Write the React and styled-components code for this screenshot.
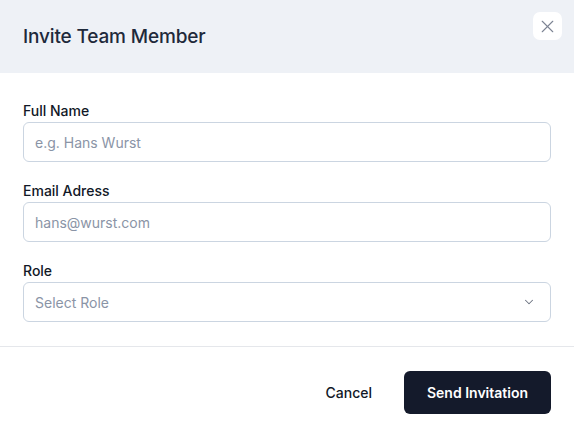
import styled, { createGlobalStyle } from 'styled-components';
import { X, ChevronDown } from 'lucide-react';

const GlobalStyle = createGlobalStyle`
  html, body {
    margin: 0;
    padding: 0;
    background: #ffffff;
  }
  body {
    font-family: Inter, "Liberation Sans", sans-serif;
    -webkit-font-smoothing: antialiased;
  }
  * {
    box-sizing: border-box;
  }
`;

const FIELDS = [
  { id: 'name', label: 'Full Name', placeholder: 'e.g. Hans Wurst', type: 'text' },
  { id: 'email', label: 'Email Adress', placeholder: 'hans@wurst.com', type: 'email' },
];

const InviteDialog = () => {
  return (
    <Dialog>
      <Header>
        <Title>Invite Team Member</Title>
        <CloseButton aria-label="Close">
          <X size={21} strokeWidth={1.3} />
        </CloseButton>
      </Header>

      <Body>
        {FIELDS.map((field) => (
          <Field key={field.id}>
            <Label htmlFor={field.id}>{field.label}</Label>
            <Input id={field.id} type={field.type} placeholder={field.placeholder} />
          </Field>
        ))}
        <Field>
          <Label htmlFor="role">Role</Label>
          <SelectBox id="role">
            <SelectText>Select Role</SelectText>
            <ChevronDown size={14} strokeWidth={1.75} />
          </SelectBox>
        </Field>
      </Body>

      <Footer>
        <GhostButton>Cancel</GhostButton>
        <PrimaryButton>Send Invitation</PrimaryButton>
      </Footer>
    </Dialog>
  );
};

export default function App() {
  return (
    <>
      <GlobalStyle />
      <InviteDialog />
    </>
  );
}

// ============================================
// STYLED COMPONENTS
// ============================================

const Dialog = styled.div`
  width: 574px;
  height: 438px;
  background: #ffffff;
  display: flex;
  flex-direction: column;
  overflow: hidden;
`;

const Header = styled.div`
  position: relative;
  height: 73px;
  flex: 0 0 auto;
  display: flex;
  align-items: center;
  padding: 0 23px;
  background: #eef1f6;
`;

const Title = styled.h2`
  margin: 0;
  font-size: 19px;
  font-weight: 500;
  color: #1e293b;
  letter-spacing: -0.15px;
`;

const CloseButton = styled.button`
  position: absolute;
  top: 12px;
  right: 12px;
  width: 29px;
  height: 28px;
  border: none;
  border-radius: 7px;
  background: #ffffff;
  color: #7c8493;
  display: flex;
  align-items: center;
  justify-content: center;
  padding: 0;
  cursor: pointer;
`;

const Body = styled.div`
  display: flex;
  flex-direction: column;
  gap: 19px;
  padding: 28px 23px 24px;
  border-bottom: 1px solid #e5e7eb;
`;

const Field = styled.div`
  display: flex;
  flex-direction: column;
  gap: 1px;
`;

const Label = styled.label`
  font-size: 14px;
  line-height: 20px;
  font-weight: 500;
  color: #111827;
`;

const Input = styled.input`
  height: 40px;
  width: 100%;
  border: 1px solid #cbd5e1;
  border-radius: 6px;
  padding: 0 11px;
  font-family: inherit;
  font-size: 14px;
  color: #111827;
  background: #ffffff;
  outline: none;

  &::placeholder {
    color: #8a94a6;
  }
`;

const SelectBox = styled.div`
  height: 40px;
  border: 1px solid #cbd5e1;
  border-radius: 6px;
  padding: 0 14px 0 11px;
  display: flex;
  align-items: center;
  justify-content: space-between;
  color: #6b7280;
  background: #ffffff;
`;

const SelectText = styled.span`
  font-size: 14px;
  color: #8a94a6;
`;

const Footer = styled.div`
  flex: 1;
  display: flex;
  align-items: center;
  justify-content: flex-end;
  gap: 16px;
  padding: 0 23px;
`;

const GhostButton = styled.button`
  height: 43px;
  padding: 0 16px;
  border: none;
  background: transparent;
  font-family: inherit;
  font-size: 14px;
  font-weight: 500;
  color: #111827;
  cursor: pointer;
`;

const PrimaryButton = styled.button`
  height: 43px;
  width: 147px;
  border: none;
  border-radius: 6px;
  background: #141a2b;
  font-family: inherit;
  font-size: 14px;
  font-weight: 600;
  color: #ffffff;
  cursor: pointer;
`;
